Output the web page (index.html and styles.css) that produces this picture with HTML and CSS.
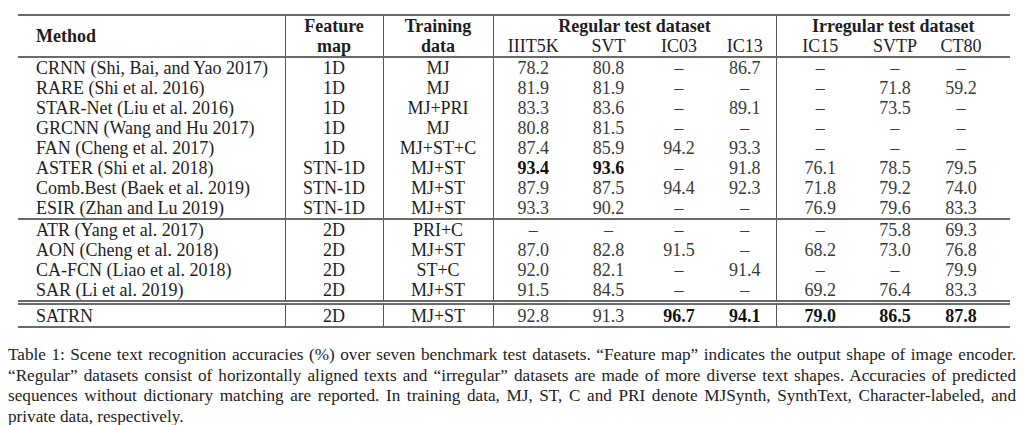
FILE: index.html
```html
<!DOCTYPE html>
<html>
<head>
<meta charset="utf-8">
<link rel="stylesheet" href="styles.css">
</head>
<body>
<div class="page">
<table class="results">
  <colgroup>
    <col class="c-method"><col class="c-feat"><col class="c-train">
    <col class="c-iiit"><col class="c-svt"><col class="c-ic03"><col class="c-ic13">
    <col class="c-ic15"><col class="c-svtp"><col class="c-ct80">
  </colgroup>
  <thead>
    <tr class="h1">
      <th rowspan="2" class="method vr">Method</th>
      <th class="vr">Feature</th>
      <th class="vr">Training</th>
      <th colspan="4" class="vr">Regular test dataset</th>
      <th colspan="3">Irregular test dataset</th>
    </tr>
    <tr class="h2">
      <th class="vr">map</th>
      <th class="vr">data</th>
      <td>IIIT5K</td><td>SVT</td><td>IC03</td><td class="vr">IC13</td>
      <td>IC15</td><td>SVTP</td><td class="ct">CT80</td>
    </tr>
  </thead>
  <tbody>
    <tr><td class="method vr">CRNN (Shi, Bai, and Yao 2017)</td><td class="vr">1D</td><td class="vr">MJ</td><td class="n">78.2</td><td class="n">80.8</td><td class="n">–</td><td class="n vr">86.7</td><td class="n">–</td><td class="n">–</td><td class="n ct">–</td></tr>
    <tr><td class="method vr">RARE (Shi et al. 2016)</td><td class="vr">1D</td><td class="vr">MJ</td><td class="n">81.9</td><td class="n">81.9</td><td class="n">–</td><td class="n vr">–</td><td class="n">–</td><td class="n">71.8</td><td class="n ct">59.2</td></tr>
    <tr><td class="method vr">STAR-Net (Liu et al. 2016)</td><td class="vr">1D</td><td class="vr">MJ+PRI</td><td class="n">83.3</td><td class="n">83.6</td><td class="n">–</td><td class="n vr">89.1</td><td class="n">–</td><td class="n">73.5</td><td class="n ct">–</td></tr>
    <tr><td class="method vr">GRCNN (Wang and Hu 2017)</td><td class="vr">1D</td><td class="vr">MJ</td><td class="n">80.8</td><td class="n">81.5</td><td class="n">–</td><td class="n vr">–</td><td class="n">–</td><td class="n">–</td><td class="n ct">–</td></tr>
    <tr><td class="method vr">FAN (Cheng et al. 2017)</td><td class="vr">1D</td><td class="vr">MJ+ST+C</td><td class="n">87.4</td><td class="n">85.9</td><td class="n">94.2</td><td class="n vr">93.3</td><td class="n">–</td><td class="n">–</td><td class="n ct">–</td></tr>
    <tr><td class="method vr">ASTER (Shi et al. 2018)</td><td class="vr">STN-1D</td><td class="vr">MJ+ST</td><td class="n b">93.4</td><td class="n b">93.6</td><td class="n">–</td><td class="n vr">91.8</td><td class="n">76.1</td><td class="n">78.5</td><td class="n ct">79.5</td></tr>
    <tr><td class="method vr">Comb.Best (Baek et al. 2019)</td><td class="vr">STN-1D</td><td class="vr">MJ+ST</td><td class="n">87.9</td><td class="n">87.5</td><td class="n">94.4</td><td class="n vr">92.3</td><td class="n">71.8</td><td class="n">79.2</td><td class="n ct">74.0</td></tr>
    <tr class="sep"><td class="method vr">ESIR (Zhan and Lu 2019)</td><td class="vr">STN-1D</td><td class="vr">MJ+ST</td><td class="n">93.3</td><td class="n">90.2</td><td class="n">–</td><td class="n vr">–</td><td class="n">76.9</td><td class="n">79.6</td><td class="n ct">83.3</td></tr>
    <tr><td class="method vr">ATR (Yang et al. 2017)</td><td class="vr">2D</td><td class="vr">PRI+C</td><td class="n">–</td><td class="n">–</td><td class="n">–</td><td class="n vr">–</td><td class="n">–</td><td class="n">75.8</td><td class="n ct">69.3</td></tr>
    <tr><td class="method vr">AON (Cheng et al. 2018)</td><td class="vr">2D</td><td class="vr">MJ+ST</td><td class="n">87.0</td><td class="n">82.8</td><td class="n">91.5</td><td class="n vr">–</td><td class="n">68.2</td><td class="n">73.0</td><td class="n ct">76.8</td></tr>
    <tr><td class="method vr">CA-FCN (Liao et al. 2018)</td><td class="vr">2D</td><td class="vr">ST+C</td><td class="n">92.0</td><td class="n">82.1</td><td class="n">–</td><td class="n vr">91.4</td><td class="n">–</td><td class="n">–</td><td class="n ct">79.9</td></tr>
    <tr class="dbl"><td class="method vr">SAR (Li et al. 2019)</td><td class="vr">2D</td><td class="vr">MJ+ST</td><td class="n">91.5</td><td class="n">84.5</td><td class="n">–</td><td class="n vr">–</td><td class="n">69.2</td><td class="n">76.4</td><td class="n ct">83.3</td></tr>
    <tr class="last"><td class="method vr">SATRN</td><td class="vr">2D</td><td class="vr">MJ+ST</td><td class="n">92.8</td><td class="n">91.3</td><td class="n b">96.7</td><td class="n b vr">94.1</td><td class="n b">79.0</td><td class="n b">86.5</td><td class="n b ct">87.8</td></tr>
  </tbody>
</table>
<p class="caption">Table 1: Scene text recognition accuracies (%) over seven benchmark test datasets. “Feature map” indicates the output shape of image encoder. “Regular” datasets consist of horizontally aligned texts and “irregular” datasets are made of more diverse text shapes. Accuracies of predicted sequences without dictionary matching are reported. In training data, MJ, ST, C and PRI denote MJSynth, SynthText, Character-labeled, and private data, respectively.</p>
</div>
</body>
</html>
```
FILE: styles.css
```css
html, body {
  margin: 0;
  padding: 0;
  background: #ffffff;
}

.page {
  padding: 14px 14px 0 8px;
  font-family: "Liberation Serif", "Times New Roman", serif;
  color: #1e1e1e;
}

.results {
  margin-left: 10px;
  width: 992px;
  border-collapse: collapse;
  table-layout: fixed;
  font-size: 18px;
  border-top: 2px solid #6a6a6a;
  border-bottom: 2px solid #6a6a6a;
}

.c-method { width: 267px; }
.c-feat { width: 98px; }
.c-train { width: 110px; }
.c-iiit { width: 80px; }
.c-svt { width: 71px; }
.c-ic03 { width: 70px; }
.c-ic13 { width: 62px; }
.c-ic15 { width: 88px; }
.c-svtp { width: 62px; }
.c-ct80 { width: 84px; }

.results th,
.results td {
  padding: 0;
  height: 20px;
  line-height: 20px;
  text-align: center;
  white-space: nowrap;
  vertical-align: middle;
}

.results .ct {
  padding-right: 14px;
}

.results th {
  font-weight: bold;
}

.results .method {
  text-align: left;
  padding-left: 18px;
}

.results .vr {
  border-right: 1px solid #555;
}

.h2 th,
.h2 td {
  border-bottom: 2px solid #6a6a6a;
}

.results th.method {
  border-bottom: 2px solid #6a6a6a;
}

.results .n {
  color: #3a3a3a;
}

.results .n.b {
  color: #111;
  font-weight: bold;
}

.sep td {
  border-bottom: 2px solid #6a6a6a;
}

.dbl td {
  border-bottom: 5px double #6a6a6a;
}

.last td {
  height: 21px;
}

.caption {
  margin: 17px 0 0 0;
  width: 1008px;
  font-size: 17.2px;
  line-height: 20.5px;
  text-align: justify;
  color: #222;
}
```
